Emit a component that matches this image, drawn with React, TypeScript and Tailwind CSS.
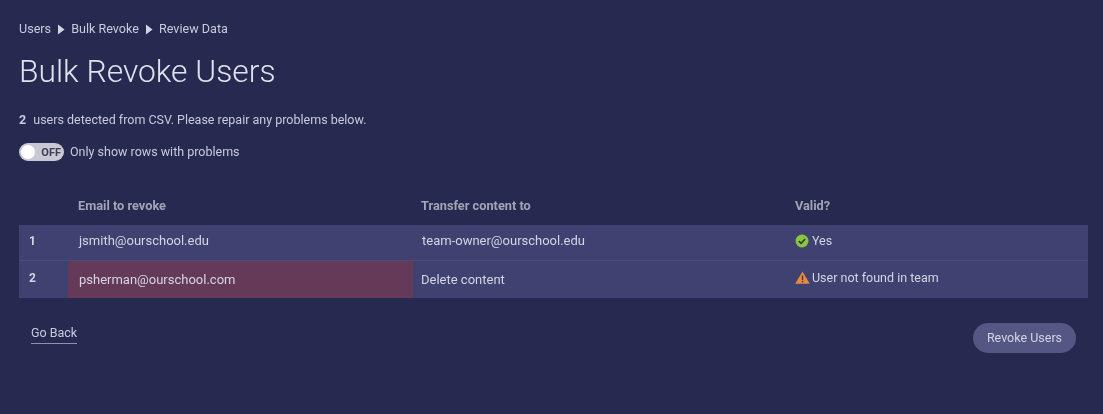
function Caret() {
  return (
    <svg width="8" height="11" viewBox="0 0 8 11" className="mx-[6px] mt-px shrink-0">
      <path d="M1 0.5 L7.5 5.5 L1 10.5 Z" fill="#d3d5e3" />
    </svg>
  )
}

function CheckIcon() {
  return (
    <svg width="14" height="14" viewBox="0 0 14 14" className="shrink-0">
      <circle cx="7" cy="7" r="6.5" fill="#8cc63f" />
      <path d="M3.8 7.2 L6 9.3 L10.2 5" fill="none" stroke="#2f3a3a" strokeWidth="1.7" />
    </svg>
  )
}

function WarnIcon() {
  return (
    <svg width="15" height="13" viewBox="0 0 15 13" className="shrink-0">
      <path d="M7.5 0.5 L14.8 12.8 L0.2 12.8 Z" fill="#e58a41" strokeLinejoin="round" />
      <rect x="6.8" y="4.5" width="1.4" height="4.4" fill="#4a3040" />
      <rect x="6.8" y="9.8" width="1.4" height="1.5" fill="#4a3040" />
    </svg>
  )
}

const rowGrid = 'grid grid-cols-[49px_345px_372px_1fr]'

export default function App() {
  return (
    <div className="h-[414px] w-[1103px] overflow-hidden bg-[#262950] pl-[19px] pr-[15px] pt-[21px] font-['Roboto',sans-serif] text-[#d3d5e3] blur-[0.5px]">
      <nav className="flex h-4 items-center text-[12.6px] leading-4 text-[#c9cbdc]">
        <span>Users</span>
        <Caret />
        <span>Bulk Revoke</span>
        <Caret />
        <span>Review Data</span>
      </nav>

      <h1 className="mt-[14px] text-[31.8px] font-light leading-[40px] text-[#e0e2ee]">Bulk Revoke Users</h1>

      <p className="mt-[21px] text-[12.5px] leading-4 text-[#c9cbdc]">
        <span className="mr-[4px] font-bold">2</span> users detected from CSV. Please repair any problems below.
      </p>

      <div className="mt-[15px] flex items-center">
        <div className="flex h-[18px] w-[45px] items-center justify-between rounded-full bg-[#c8c9d2] pl-[2px] pr-[3px]">
          <span className="h-[14px] w-[14px] rounded-full bg-white" />
          <span className="text-[11px] font-bold leading-none text-[#3e4058]">OFF</span>
        </div>
        <span className="ml-[6px] text-[12.5px] leading-4 text-[#c9cbdc]">Only show rows with problems</span>
      </div>

      <div className="mt-[34px]">
        <div className={`${rowGrid} h-[30px] text-[12.75px] font-bold leading-4 text-[#a3a5b4]`}>
          <div />
          <div className="pl-[10px] pt-[3px]">Email to revoke</div>
          <div className="pl-[8px] pt-[3px]">Transfer content to</div>
          <div className="pl-[10px] pt-[3px]">Valid?</div>
        </div>

        <div className="bg-[#3f4170] text-[13px] leading-4 text-[#d3d5e3]">
          <div className={`${rowGrid} h-[36px] items-center border-b border-[#4a4c7c] pb-[3px]`}>
            <div className="pl-[10px] text-[12px] font-bold">1</div>
            <div className="pl-[11px]">jsmith@ourschool.edu</div>
            <div className="pl-[9px]">team-owner@ourschool.edu</div>
            <div className="flex items-center gap-[3px] pl-[10px] text-[12.5px]">
              <CheckIcon />
              <span>Yes</span>
            </div>
          </div>
          <div className={`${rowGrid} h-[37px] items-stretch`}>
            <div className="flex items-center pb-[4px] pl-[10px] text-[12px] font-bold">2</div>
            <div className="flex items-center bg-[#643a58] pl-[11px] pt-[1px]">psherman@ourschool.com</div>
            <div className="flex items-center pl-[8px]">Delete content</div>
            <div className="flex items-center gap-[2px] pb-[4px] pl-[10px] text-[12.5px]">
              <WarnIcon />
              <span>User not found in team</span>
            </div>
          </div>
        </div>
      </div>

      <div className="flex items-start justify-between pl-3 pr-[12px] pt-[25px]">
        <a className="mt-[2px] border-b border-[#8f91b4] pb-[2px] text-[12.5px] leading-4 text-[#c9cbdc]">Go Back</a>
        <button className="h-[30px] w-[103px] rounded-full bg-[#545684] text-[12.5px] text-[#d3d5e3]">Revoke Users</button>
      </div>
    </div>
  )
}
